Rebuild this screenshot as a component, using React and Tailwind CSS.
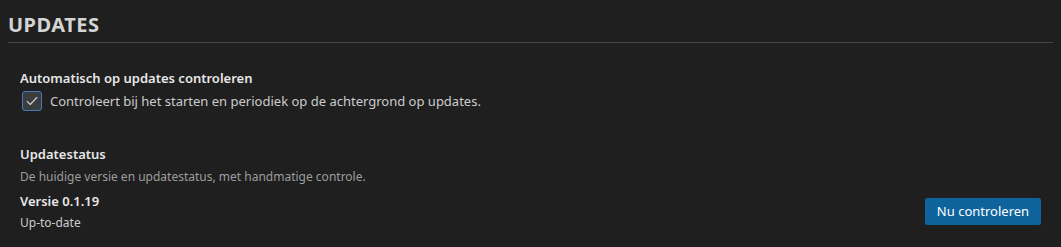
import React from "react";

export default function App() {
  return (
    <div
      className="w-[1061px] h-[247px] bg-[#1f1f1f] text-[#cccccc] overflow-hidden"
      style={{ fontFamily: '"Noto Sans", "Open Sans", sans-serif' }}
    >
      <div className="px-[8px] pt-[11px]">
        <h2 className="text-[20px] font-bold tracking-[0.5px] text-[#d4d4d4] leading-[28px] pb-[3px] border-b border-[#474747]">
          UPDATES
        </h2>
      </div>
      <div className="pl-[20px] pr-[20px] pt-[26px]">
        <div className="text-[13px] font-semibold text-[#e7e7e7] leading-[18px]">
          Automatisch op updates controleren
        </div>
        <label className="flex items-center gap-[8px] mt-[4px] ml-[2px]">
          <span className="w-[20px] h-[20px] rounded-[3px] border border-[#3f7bc0] bg-[#3c3c3c] flex items-center justify-center">
            <svg width="14" height="14" viewBox="0 0 16 16" fill="none">
              <path d="M2.5 8.5 L6 12 L13.5 4" stroke="#d0d0d0" strokeWidth="1.3" strokeLinecap="round" strokeLinejoin="round" />
            </svg>
          </span>
          <span className="text-[13px] text-[#cccccc] leading-[20px]">
            Controleert bij het starten en periodiek op de achtergrond op updates.
          </span>
        </label>

        <div className="mt-[34px] text-[13px] font-semibold text-[#e7e7e7] leading-[18px]">
          Updatestatus
        </div>
        <div className="mt-[6px] text-[12px] text-[#9d9d9d] leading-[16px]">
          De huidige versie en updatestatus, met handmatige controle.
        </div>
        <div className="flex items-end justify-between">
          <div>
            <div className="mt-[7px] text-[13px] font-semibold text-[#e7e7e7] leading-[18px]">
              Versie 0.1.19
            </div>
            <div className="mt-[5px] text-[12px] text-[#cccccc] leading-[16px]">
              Up-to-date
            </div>
          </div>
          <button className="w-[116px] h-[27px] bg-[#0e639c] text-white text-[13px] rounded-[2px] mb-[6px]">
            Nu controleren
          </button>
        </div>
      </div>
    </div>
  );
}
